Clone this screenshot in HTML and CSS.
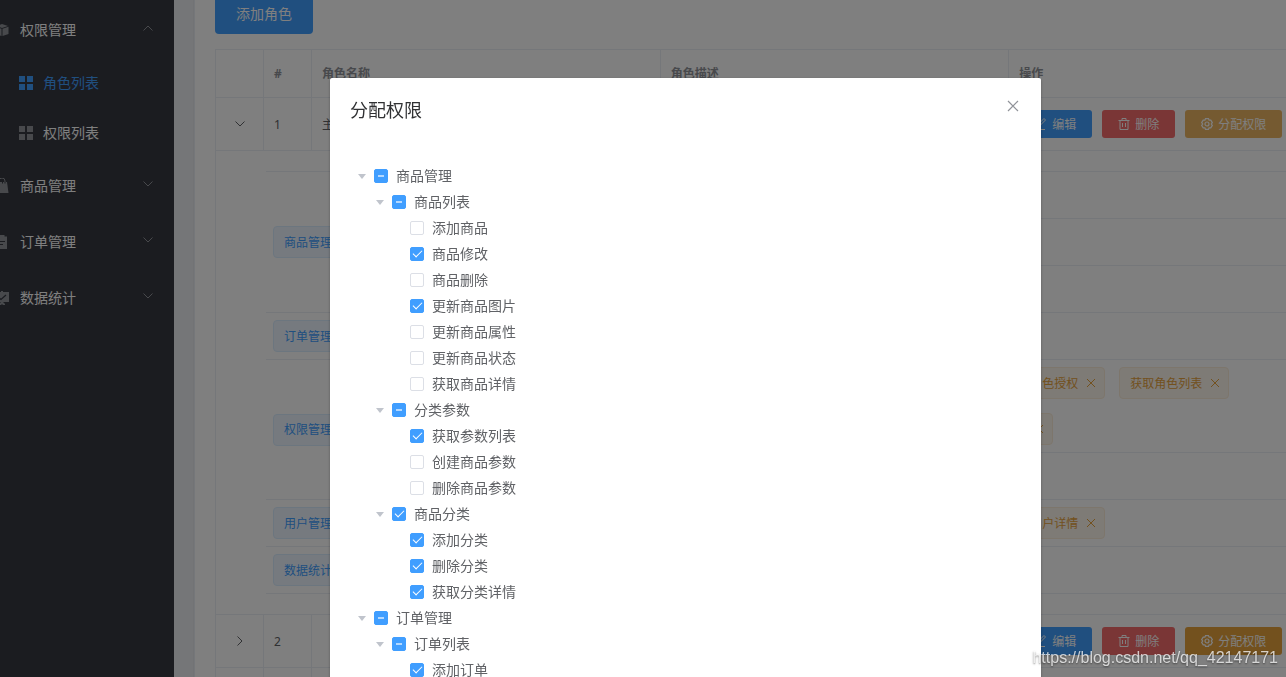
FILE: index.html
```html
<!DOCTYPE html>
<html lang="zh-CN">
<head>
<meta charset="utf-8">
<title>分配权限</title>
<link rel="stylesheet" href="styles.css">
</head>
<body>
<svg class="sprite" aria-hidden="true">
  <symbol id="chevron" viewBox="0 0 12 12"><path d="M1.500 3.500 6 8l4.500-4.500" fill="none" stroke="currentColor"/></symbol>
  <symbol id="close" viewBox="0 0 16 16"><path d="m3 3 10 10m0-10-10 10" fill="none" stroke="currentColor" stroke-width="1.200"/></symbol>
  <symbol id="close-small" viewBox="0 0 10 10"><path d="m1 1 8 8m0-8-8 8" fill="none" stroke="currentColor"/></symbol>
  <symbol id="grid" viewBox="0 0 14 14"><path d="M0 0h6v6H0zM8 0h6v6H8zM0 8h6v6H0zM8 8h6v6H8z" fill="currentColor"/></symbol>
  <symbol id="cube" viewBox="0 0 16 16"><path d="M8 2l6 2-6 2-6-2zM1.500 4.800l6 2V14l-6-2zM14.500 4.800l-6 2V14l6-2z" fill="currentColor"/></symbol>
  <symbol id="bag" viewBox="0 0 16 16"><path d="M2 4h11l1.500 11H.5z" fill="currentColor"/><path d="M5 4V3a3 3 0 0 1 6 0v1" fill="none" stroke="currentColor"/><path d="M8.500 4v1.500M11 4v1.500" stroke="#363841"/></symbol>
  <symbol id="clipboard" viewBox="0 0 16 16"><path d="M1 2.500h4.500V1h5v1.500H13V15H1z" fill="currentColor"/><path d="M4 7.500h7M4 10.500h5" stroke="#363841" stroke-width="1.200"/></symbol>
  <symbol id="board" viewBox="0 0 16 16"><path d="M0 2h7V1h2v1h6v10H0zM5 14l2-2h2l2 2v1H9l-1-1-1 1H5z" fill="currentColor"/><path d="m4 7 3 2.500L12 5" fill="none" stroke="#363841" stroke-width="1.300"/></symbol>
  <symbol id="edit" viewBox="0 0 12 12"><path d="M1 11.500h9M2.500 9 3 6.500 9 .5l1.500 1.500-6 6z" fill="none" stroke="currentColor"/></symbol>
  <symbol id="trash" viewBox="0 0 12 12"><path d="M.5 2.500h11M4 2.500v-2h4v2M2 2.500v9h8v-9M4.500 5v4M7.500 5v4" fill="none" stroke="currentColor"/></symbol>
  <symbol id="gear" viewBox="0 0 12 12"><path d="M4.500.7h3l.6 1.500 1.700-.1 1.500 2.500L10.300 6l1 1.400-1.500 2.500-1.700-.1-.6 1.500h-3l-.6-1.500-1.700.1L.7 7.400 1.700 6 .7 4.600l1.500-2.500 1.700.1z" fill="none" stroke="currentColor" stroke-width="1.200"/><circle cx="6" cy="6" r="2" fill="none" stroke="currentColor" stroke-width="1.200"/></symbol>
</svg>

<div class="app">
  <nav class="sidebar">
    <a class="menu-title" href="#"><svg class="icon-lg"><use href="#cube"/></svg><span>权限管理</span><svg class="arrow arrow-up"><use href="#chevron"/></svg></a>
    <a class="menu-item active" href="#"><svg class="icon-md"><use href="#grid"/></svg><span>角色列表</span></a>
    <a class="menu-item" href="#"><svg class="icon-md"><use href="#grid"/></svg><span>权限列表</span></a>
    <a class="menu-title" href="#"><svg class="icon-lg"><use href="#bag"/></svg><span>商品管理</span><svg class="arrow"><use href="#chevron"/></svg></a>
    <a class="menu-title" href="#"><svg class="icon-lg"><use href="#clipboard"/></svg><span>订单管理</span><svg class="arrow"><use href="#chevron"/></svg></a>
    <a class="menu-title" href="#"><svg class="icon-lg"><use href="#board"/></svg><span>数据统计</span><svg class="arrow"><use href="#chevron"/></svg></a>
  </nav>

  <main class="main">
    <section class="card">
      <button class="btn btn-add" type="button">添加角色</button>
      <table class="roles">
        <colgroup><col class="col-narrow"><col class="col-narrow"><col><col><col></colgroup>
        <thead>
          <tr><th></th><th>#</th><th>角色名称</th><th>角色描述</th><th>操作</th></tr>
        </thead>
        <tbody>
          <tr>
            <td class="expand"><svg class="icon-sm"><use href="#chevron"/></svg></td><td>1</td><td>主管</td><td>技术负责人</td>
            <td><div class="actions">
              <button class="btn btn-primary" type="button"><svg class="icon-sm"><use href="#edit"/></svg>编辑</button>
              <button class="btn btn-danger" type="button"><svg class="icon-sm"><use href="#trash"/></svg>删除</button>
              <button class="btn btn-warning focused" type="button"><svg class="icon-sm"><use href="#gear"/></svg>分配权限</button>
            </div></td>
          </tr>
          <tr>
            <td class="detail" colspan="5">
              <div class="rights">
                <div class="right-group">
                  <div class="level-one"><span class="tag">商品管理</span></div>
                  <div class="level-rest">
                    <div class="right-row"><div class="level-two"><span class="tag tag-green">商品列表</span></div><div class="level-three"><span class="tag tag-orange">商品修改<svg class="tag-x"><use href="#close-small"/></svg></span></div></div>
                    <div class="right-row"><div class="level-two"><span class="tag tag-green">分类参数</span></div><div class="level-three"><span class="tag tag-orange">获取参数列表<svg class="tag-x"><use href="#close-small"/></svg></span></div></div>
                    <div class="right-row"><div class="level-two"><span class="tag tag-green">商品分类</span></div><div class="level-three"><span class="tag tag-orange">添加分类<svg class="tag-x"><use href="#close-small"/></svg></span></div></div>
                  </div>
                </div>
                <div class="right-group">
                  <div class="level-one"><span class="tag">订单管理</span></div>
                  <div class="level-rest">
                    <div class="right-row"><div class="level-two"><span class="tag tag-green">订单列表</span></div><div class="level-three"><span class="tag tag-orange">添加订单<svg class="tag-x"><use href="#close-small"/></svg></span></div></div>
                  </div>
                </div>
                <div class="right-group">
                  <div class="level-one"><span class="tag">权限管理</span></div>
                  <div class="level-rest">
                    <div class="right-row"><div class="level-two"><span class="tag tag-green">角色列表</span></div><div class="level-three">
                      <span class="tag tag-orange">添加角色<svg class="tag-x"><use href="#close-small"/></svg></span>
                      <span class="tag tag-orange">删除角色<svg class="tag-x"><use href="#close-small"/></svg></span>
                      <span class="tag tag-orange">角色授权<svg class="tag-x"><use href="#close-small"/></svg></span>
                      <span class="tag tag-orange">取消角色授权<svg class="tag-x"><use href="#close-small"/></svg></span>
                      <span class="tag tag-orange">获取角色列表<svg class="tag-x"><use href="#close-small"/></svg></span>
                      <span class="tag tag-orange">获取角色详情<svg class="tag-x"><use href="#close-small"/></svg></span>
                      <span class="tag tag-orange">更新角色信息<svg class="tag-x"><use href="#close-small"/></svg></span>
                      <span class="tag tag-orange">更新角色权限<svg class="tag-x"><use href="#close-small"/></svg></span>
                    </div></div>
                    <div class="right-row"><div class="level-two"><span class="tag tag-green">权限列表</span></div><div class="level-three"><span class="tag tag-orange">查看权限<svg class="tag-x"><use href="#close-small"/></svg></span></div></div>
                  </div>
                </div>
                <div class="right-group">
                  <div class="level-one"><span class="tag">用户管理</span></div>
                  <div class="level-rest">
                    <div class="right-row"><div class="level-two"><span class="tag tag-green">用户列表</span></div><div class="level-three">
                      <span class="tag tag-orange">添加用户<svg class="tag-x"><use href="#close-small"/></svg></span>
                      <span class="tag tag-orange">删除用户<svg class="tag-x"><use href="#close-small"/></svg></span>
                      <span class="tag tag-orange">更新用户<svg class="tag-x"><use href="#close-small"/></svg></span>
                      <span class="tag tag-orange">获取用户详情<svg class="tag-x"><use href="#close-small"/></svg></span>
                    </div></div>
                  </div>
                </div>
                <div class="right-group">
                  <div class="level-one"><span class="tag">数据统计</span></div>
                  <div class="level-rest">
                    <div class="right-row"><div class="level-two"><span class="tag tag-green">数据报表</span></div><div class="level-three"><span class="tag tag-orange">查看数据<svg class="tag-x"><use href="#close-small"/></svg></span></div></div>
                  </div>
                </div>
              </div>
            </td>
          </tr>
          <tr>
            <td class="expand"><svg class="icon-sm arrow-right"><use href="#chevron"/></svg></td><td>2</td><td></td><td></td>
            <td><div class="actions">
              <button class="btn btn-primary" type="button"><svg class="icon-sm"><use href="#edit"/></svg>编辑</button>
              <button class="btn btn-danger" type="button"><svg class="icon-sm"><use href="#trash"/></svg>删除</button>
              <button class="btn btn-warning" type="button"><svg class="icon-sm"><use href="#gear"/></svg>分配权限</button>
            </div></td>
          </tr>
          <tr><td></td><td></td><td></td><td></td><td></td></tr>
        </tbody>
      </table>
    </section>
  </main>
</div>

<div class="overlay">
  <div class="dialog" role="dialog" aria-labelledby="dialog-title">
    <header class="dialog-header">
      <h1 class="dialog-title" id="dialog-title">分配权限</h1>
      <button class="dialog-close" type="button" aria-label="关闭"><svg class="icon-lg"><use href="#close"/></svg></button>
    </header>
    <div class="tree">
      <div class="node"><span class="caret"></span><input class="check partial" type="checkbox" id="n1"><label for="n1">商品管理</label></div>
      <div class="children">
        <div class="node"><span class="caret"></span><input class="check partial" type="checkbox" id="n2"><label for="n2">商品列表</label></div>
        <div class="children">
          <div class="node leaf"><input class="check" type="checkbox" id="n3"><label for="n3">添加商品</label></div>
          <div class="node leaf"><input class="check" type="checkbox" id="n4" checked><label for="n4">商品修改</label></div>
          <div class="node leaf"><input class="check" type="checkbox" id="n5"><label for="n5">商品删除</label></div>
          <div class="node leaf"><input class="check" type="checkbox" id="n6" checked><label for="n6">更新商品图片</label></div>
          <div class="node leaf"><input class="check" type="checkbox" id="n7"><label for="n7">更新商品属性</label></div>
          <div class="node leaf"><input class="check" type="checkbox" id="n8"><label for="n8">更新商品状态</label></div>
          <div class="node leaf"><input class="check" type="checkbox" id="n9"><label for="n9">获取商品详情</label></div>
        </div>
        <div class="node"><span class="caret"></span><input class="check partial" type="checkbox" id="n10"><label for="n10">分类参数</label></div>
        <div class="children">
          <div class="node leaf"><input class="check" type="checkbox" id="n11" checked><label for="n11">获取参数列表</label></div>
          <div class="node leaf"><input class="check" type="checkbox" id="n12"><label for="n12">创建商品参数</label></div>
          <div class="node leaf"><input class="check" type="checkbox" id="n13"><label for="n13">删除商品参数</label></div>
        </div>
        <div class="node"><span class="caret"></span><input class="check" type="checkbox" id="n14" checked><label for="n14">商品分类</label></div>
        <div class="children">
          <div class="node leaf"><input class="check" type="checkbox" id="n15" checked><label for="n15">添加分类</label></div>
          <div class="node leaf"><input class="check" type="checkbox" id="n16" checked><label for="n16">删除分类</label></div>
          <div class="node leaf"><input class="check" type="checkbox" id="n17" checked><label for="n17">获取分类详情</label></div>
        </div>
      </div>
      <div class="node"><span class="caret"></span><input class="check partial" type="checkbox" id="n18"><label for="n18">订单管理</label></div>
      <div class="children">
        <div class="node"><span class="caret"></span><input class="check partial" type="checkbox" id="n19"><label for="n19">订单列表</label></div>
        <div class="children">
          <div class="node leaf"><input class="check" type="checkbox" id="n20" checked><label for="n20">添加订单</label></div>
        </div>
      </div>
    </div>
  </div>
</div>
<div class="watermark">https://blog.csdn.net/qq_42147171</div>
</body>
</html>
```
FILE: styles.css
```css
* { box-sizing: border-box; }

body {
  margin: 0;
  height: 100vh;
  overflow: hidden;
  background: #eaedf1;
  color: #606266;
  font: 12px/23px "Noto Sans", "Noto Sans CJK SC", sans-serif;
}

svg { display: block; flex: none; }
.sprite { position: absolute; width: 0; height: 0; }
.icon-sm { width: 12px; height: 12px; }
.icon-md { width: 14px; height: 14px; }
.icon-lg { width: 16px; height: 16px; }

.app {
  display: flex;
  min-height: 100vh;
  margin-left: -26px;
}

/* sidebar */
.sidebar {
  flex: none;
  width: 200px;
  padding-top: 2px;
  background: #363841;
}
.menu-title,
.menu-item {
  display: flex;
  align-items: center;
  color: #fff;
  font-size: 14px;
  text-decoration: none;
}
.menu-title { height: 56px; padding: 0 20px; gap: 10px; }
.menu-item { height: 50px; padding: 0 45px; gap: 10px; }
.menu-title span,
.menu-item span { padding-bottom: 2px; }
.menu-title svg,
.menu-item svg { color: #909399; }
.menu-item.active,
.menu-item.active svg { color: #409eff; }
.menu-title .arrow { width: 12px; height: 12px; margin: 0 0 4px auto; }
.arrow-up { transform: rotate(180deg); }
.arrow-right { transform: rotate(-90deg); }

/* role table */
.main { flex: none; padding: 0 20px; }
.card {
  min-height: 100vh;
  padding: 0 20px;
  border: solid #ebeef5;
  border-width: 0 1px;
  background: #fff;
  box-shadow: 0 1px 1px rgba(0, 0, 0, .15);
}
.btn {
  display: inline-flex;
  align-items: center;
  gap: 5px;
  height: 28px;
  padding: 0 15px;
  border: 1px solid transparent;
  border-radius: 3px;
  color: #fff;
  font: inherit;
}
.btn-add {
  display: block;
  height: 40px;
  margin: -6px 0 15px;
  padding: 0 20px 2px;
  border-radius: 4px;
  background: #409eff;
  font-size: 14px;
}
.btn-primary { background: #409eff; }
.btn-danger { background: #f56c6c; }
.btn-warning { background: #e6a23c; }
.btn-warning.focused { background: #ebb563; }
.actions { display: flex; gap: 10px; }

.roles {
  width: 1143px;
  table-layout: fixed;
  border-collapse: separate;
  border-spacing: 0;
  border: solid #ebeef5;
  border-width: 1px 0 0 1px;
}
.col-narrow { width: 48px; }
.roles th,
.roles td {
  height: 53px;
  padding: 0 10px;
  border: solid #ebeef5;
  border-width: 0 1px 1px 0;
  text-align: left;
}
.roles th { height: 48px; color: #909399; font-weight: 700; }
.roles .expand svg { margin: 0 auto; }
.roles .detail { padding: 20px 52px 20px 50px; }

.rights { border-top: 1px solid #ebeef5; }
.right-group { display: flex; align-items: center; border-bottom: 1px solid #ebeef5; }
.level-one { flex: 5; }
.level-rest { flex: 19; }
.right-row { display: flex; align-items: center; }
.right-row + .right-row { border-top: 1px solid #ebeef5; }
.level-two { flex: 6; }
.level-three { display: flex; flex: 18; flex-wrap: wrap; }
.tag {
  display: inline-flex;
  align-items: center;
  height: 32px;
  margin: 7px;
  padding: 0 10px;
  border: 1px solid #d9ecff;
  border-radius: 4px;
  background: #ecf5ff;
  color: #409eff;
  vertical-align: top;
}
.tag-green { border-color: #e1f3d8; background: #f0f9eb; color: #67c23a; }
.tag-orange { padding-right: 8px; border-color: #faecd8; background: #fdf6ec; color: #e6a23c; }
.tag-x { width: 10px; height: 10px; margin-left: 8px; }

/* dialog */
.overlay {
  position: fixed;
  inset: 0;
  overflow: hidden;
  background: rgba(0, 0, 0, .5);
}
.dialog {
  width: calc(50% + 68px);
  min-height: 100vh;
  margin: 78px 0 0 330px;
  border-radius: 2px;
  background: #fff;
  box-shadow: 0 1px 3px rgba(0, 0, 0, .3);
}
.dialog-header {
  display: flex;
  justify-content: space-between;
  align-items: flex-start;
  padding: 20px 20px 10px;
}
.dialog-title {
  margin: 0;
  color: #303133;
  font-size: 18px;
  font-weight: 400;
  line-height: 24px;
}
.dialog-close {
  padding: 0;
  border: 0;
  background: none;
  color: #909399;
}
.tree { padding: 31px 20px; font-size: 14px; }
.children { padding-left: 18px; }
.node { display: flex; align-items: center; height: 26px; }
.node label { padding-bottom: 2px; }
.leaf { padding-left: 24px; }
.caret { display: flex; justify-content: center; width: 24px; }
.caret::before {
  content: "";
  border: solid transparent;
  border-width: 5px 4px 0;
  border-top-color: #c0c4cc;
}
.check {
  display: grid;
  place-items: center;
  appearance: none;
  width: 14px;
  height: 14px;
  margin: 0 8px 0 0;
  border: 1px solid #dcdfe6;
  border-radius: 2px;
  background: #fff;
}
.check:checked,
.check.partial { border-color: #409eff; background: #409eff; }
.check:checked::before {
  content: "";
  width: 4px;
  height: 8px;
  margin-bottom: 4px;
  border: solid #fff;
  border-width: 0 1px 1px 0;
  transform: rotate(45deg);
}
.check.partial::before {
  content: "";
  width: 6px;
  height: 2px;
  background: #b3d8ff;
}

.watermark {
  position: fixed;
  right: 8px;
  bottom: 8px;
  color: rgba(255, 255, 255, .75);
  font: 16px/22px "Liberation Sans", sans-serif;
  text-shadow: 0 1px 2px rgba(0, 0, 0, .5);
}
```
